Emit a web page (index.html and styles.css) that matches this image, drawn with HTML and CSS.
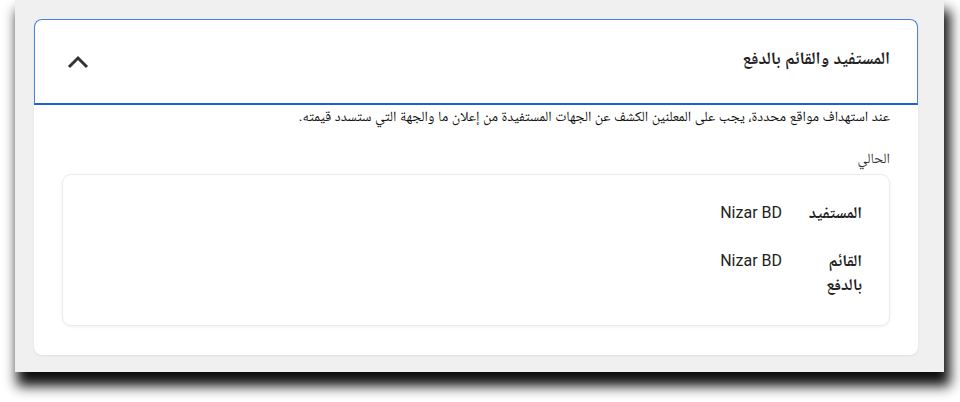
FILE: index.html
```html
<!DOCTYPE html>
<html lang="ar">
<head>
<meta charset="utf-8">
<link rel="stylesheet" href="styles.css">
</head>
<body>
<div class="frame">
  <div class="card">
    <div class="header">
      <h2 class="title">المستفيد والقائم بالدفع</h2>
      <svg class="chevron" width="22" height="14" viewBox="0 0 22 14"><polyline points="2,12 11,3 20,12" fill="none" stroke="#333" stroke-width="3"/></svg>
    </div>
    <div class="body">
      <p class="desc">عند استهداف مواقع محددة، يجب على المعلنين الكشف عن الجهات المستفيدة من إعلان ما والجهة التي ستسدد قيمته.</p>
      <p class="current">الحالي</p>
      <div class="box">
        <div class="row">
          <div class="label">المستفيد</div>
          <div class="value">Nizar BD</div>
        </div>
        <div class="row">
          <div class="label">القائم بالدفع</div>
          <div class="value">Nizar BD</div>
        </div>
      </div>
    </div>
  </div>
</div>
</body>
</html>
```

FILE: styles.css
```css
html, body {
  margin: 0;
  padding: 0;
  background: #ffffff;
}
body {
  width: 960px;
  height: 402px;
  overflow: hidden;
  font-family: Roboto, "Noto Naskh Arabic", "Noto Sans Arabic", Arial, Tahoma, "FreeSans", "DejaVu Sans", sans-serif;
}
.frame {
  margin-left: 15px;
  width: 929px;
  height: 372px;
  box-sizing: border-box;
  background: #f0f0f0;
  padding: 19px 26px 0 19px;
  box-shadow: 4px 12px 12px 2px rgba(0, 0, 0, 0.95);
}
.card {
  background: #ffffff;
  border-radius: 8px;
  height: 336px;
  box-shadow: 0 1px 2px rgba(0, 0, 0, 0.08);
  direction: rtl;
}
.header {
  height: 86px;
  box-sizing: border-box;
  border: 1px solid #4a7fe0;
  border-bottom: 2px solid #1f5fd6;
  border-radius: 8px 8px 0 0;
  display: flex;
  align-items: center;
  justify-content: space-between;
  padding: 0 27px 0 32px;
}
.title {
  margin: 0 0 4px;
  font-size: 17.5px;
  font-weight: 700;
  color: #222;
}
.chevron {
  display: block;
  margin-top: 0;
}
.body {
  padding: 0 28px 28px;
}
.desc {
  margin: 0;
  font-size: 14.3px;
  line-height: 22px;
  color: #111;
}
.current {
  margin: 20px 0 0;
  font-size: 14.3px;
  line-height: 22px;
  color: #333;
}
.box {
  margin-top: 5px;
  border: 1px solid #ececec;
  border-radius: 9px;
  box-shadow: 0 1px 3px rgba(0, 0, 0, 0.06);
  padding: 26px 27px 28px;
  display: flex;
  flex-direction: column;
  gap: 24px;
}
.row {
  display: flex;
  gap: 24px;
  font-size: 16px;
  line-height: 24px;
  color: #222;
}
.label {
  width: 56px;
  font-weight: 700;
  font-size: 16.5px;
}
.value {
  direction: ltr;
  font-size: 16px;
}
```
